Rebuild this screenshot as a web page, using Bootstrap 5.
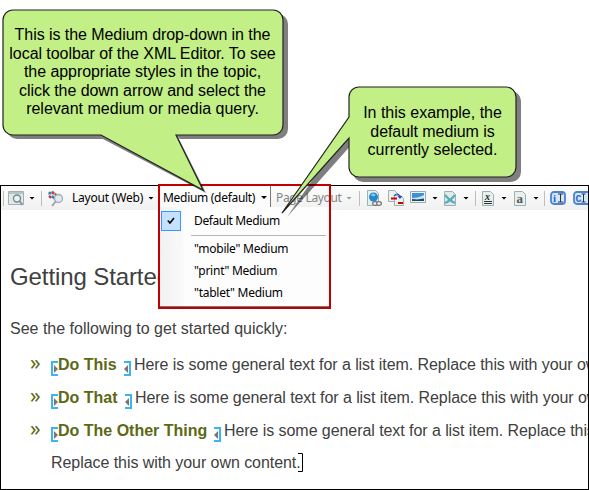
<!DOCTYPE html>
<html lang="en">
<head>
<meta charset="utf-8">
<meta name="viewport" content="width=device-width, initial-scale=1">
<title>Medium drop-down</title>
<link href="https://cdn.jsdelivr.net/npm/bootstrap@5.3.0/dist/css/bootstrap.min.css" rel="stylesheet">
<style>
body{width:589px;height:490px;background:#fff;font-family:"Liberation Sans",Arial,sans-serif;font-size:16px;color:#404040}
.stage{width:589px;height:490px;padding-top:185px}
.editor{height:305px;border:1px solid #000}
.tools{height:24px;background:linear-gradient(#fcfcfc,#f1f1f1);font-family:"Noto Sans","Open Sans",sans-serif;font-size:12px;color:#000}
.tools svg{flex:none;display:block}
.tools .label{flex:none}
.rule{flex:none;width:1px;height:15px;background:#bdbdbd}
.caret{flex:none;width:6px;height:3px;margin-right:-1px;background:#000;clip-path:polygon(0 0,100% 0,50% 100%)}
.caret.off{background:#999}
.medium{width:112px;height:23px;margin-left:6px;background:#fcfcfc;border-right:1px solid #777;padding-left:4px;align-self:flex-start}
.redbox{left:158px;top:184px;width:173px;height:125px;border:2px solid #c00000;z-index:3}
.options{left:160px;top:207px;width:170px;height:100px;background:linear-gradient(90deg,#f1f1f1,#fafafa 23px,#fdfdfd 24px);border-right:1px solid #888;border-bottom:1px solid #777;font-family:"Noto Sans","Open Sans",sans-serif;font-size:12px;color:#000;z-index:2;padding-top:3px}
.options .opt{height:22px;line-height:22px;padding-left:34px;letter-spacing:-.25px}
.options .first{letter-spacing:-.38px}
.options hr{margin:3px 3px 2px 31px;border-top:1px solid #b5b5b5;opacity:1}
.tick{width:20px;height:20px;left:1px;top:1px;background:#c4e1ff;border:1px solid #3399ff}
.page-text{padding:52px 0 0 9px}
.page-text h1{font-size:24px;line-height:30px;margin:0;color:#404040;letter-spacing:-.1px}
.page-text p{margin:25px 0 0;line-height:24px}
.steps{margin:7px 0 0;padding:0;list-style:none}
.step{height:33px;line-height:33px}
.bul{width:41px;padding-left:20px;color:#5e6814;flex:none;font-family:"Noto Sans",sans-serif;font-size:21px;padding-bottom:5px;line-height:28px}
.term{color:#5e6814;font-weight:700;flex:none}
.desc{margin-left:3px;letter-spacing:-.065px}
.tagmark{width:7px;height:15px;flex:none;margin-top:7px}
.note{z-index:5;color:#000;text-align:center;line-height:18.5px}
.note .line{display:block}
.note .snug{letter-spacing:-.06px}
.shapes{left:0;top:0;z-index:4}
</style>
</head>
<body>
<main class="stage position-relative overflow-hidden">
 <section class="editor overflow-hidden">
  <div class="tools d-flex align-items-center text-nowrap">
   <span class="rule" style="margin-left:2px"></span>
   <svg style="margin-left:4px" width="17" height="17" viewBox="0 0 17 17"><path d="M.5 1.500h15v13H.5z" fill="#dfe8e8" stroke="#9fb1b3"/><path d="M1 2h14v2H1z" fill="#b4c4c6"/><circle cx="9" cy="8.500" r="3.500" fill="#e7f3f6" stroke="#77898d" stroke-width="1.400"/><path d="M11.500 11l3 4" stroke="#8c9698" stroke-width="2"/></svg>
   <span class="caret" style="margin-left:4px"></span>
   <span class="rule" style="margin-left:7px"></span>
   <svg style="margin-left:5px" width="17" height="17" viewBox="0 0 17 17"><path d="M1 4l5-3 9 8-4 4z" fill="#d4e3ea" stroke="#9cacb3"/><path d="M2 2l2 2M5 6l2 2" stroke="#207db6" stroke-width="2"/><path d="M5 2l2 2M2 6l2 2M8 4l2 2" stroke="#d02c2c" stroke-width="2"/><circle cx="11.500" cy="8.500" r="4" fill="#dfeaf0" stroke="#9caeb6" stroke-width="1.300"/><path d="M9 11l-4 5" stroke="#a3a3a3" stroke-width="2"/></svg>
   <span class="label" style="margin-left:8px;width:76px;letter-spacing:-.2px">Layout (Web)</span>
   <span class="caret"></span>
   <div class="medium d-flex align-items-center flex-shrink-0"><span class="label" style="width:98px;letter-spacing:-.3px">Medium (default)</span><span class="caret"></span></div>
   <span class="label" style="margin-left:5px;width:70px;color:#858585;letter-spacing:-.35px">Page Layout</span>
   <span class="caret off"></span>
   <span class="rule" style="margin-left:8px"></span>
   <svg style="margin-left:7px" width="15" height="17" viewBox="0 0 15 17"><path d="M.5.500h8l3 3v12H.5z" fill="#e5efed" stroke="#9ab3b0"/><circle cx="6.500" cy="7" r="4.500" fill="#2488d0"/><path d="M3.500 5q3-3 5 0-1 2-3 1z" fill="#8dcbf2"/><g fill="#eee" stroke="#777" stroke-width="1.200"><ellipse cx="8" cy="13.500" rx="2.400" ry="1.800"/><ellipse cx="12" cy="13.500" rx="2.400" ry="1.800"/></g></svg>
   <svg style="margin-left:6px" width="17" height="17" viewBox="0 0 17 17"><path d="M.5.500h6l3 3v8H.5z" fill="#eaf2f0" stroke="#9ab3b0"/><path d="M6.500 5.500h6l3 3v7h-9z" fill="#eaf2f0" stroke="#9ab3b0"/><path d="M3 8.500h6M10 13h5" stroke="#d00000" stroke-width="2"/><path d="M6 6q3-4 6 0" fill="none" stroke="#2350bc" stroke-width="1.200"/><path d="M9.500 6h5L12 9z" fill="#2350bc"/></svg>
   <svg style="margin-left:5px" width="17" height="17" viewBox="0 0 17 17"><path d="M.5 1.500h15v11H.5z" fill="#eef4f5" stroke="#94acb2"/><path d="M2 3h12v5H2z" fill="#3b91dc"/><path d="M2 8q7 0 12-3v5H2z" fill="#c7e7f7"/><path d="M2 9l5 .5 7-1V11H2z" fill="#23485c"/></svg>
   <span class="caret" style="margin-left:5px"></span>
   <svg style="margin-left:7px" width="14" height="17" viewBox="0 0 14 17"><path d="M.5 1.500h8l3 3v11H.5z" fill="#e0ebe9" stroke="#9ab3b0"/><path d="M1 5q5 6 10 8M11 5Q6 11 1 13" fill="none" stroke="#5aa9bd" stroke-width="2.200"/></svg>
   <span class="caret" style="margin-left:5px"></span>
   <span class="rule" style="margin-left:7px"></span>
   <svg style="margin-left:6px" width="13" height="17" viewBox="0 0 13 17"><path d="M.5 1.500h8l3 3v11H.5z" fill="#e7f0ee" stroke="#9ab3b0"/><path d="M2 11.500h8M2 13.500h8" stroke="#333"/><text x="3" y="9.500" font-family="Liberation Serif,serif" font-style="italic" font-weight="700" font-size="10" fill="#222">x</text></svg>
   <span class="caret" style="margin-left:6px"></span>
   <svg style="margin-left:8px" width="13" height="17" viewBox="0 0 13 17"><path d="M.5 1.500h8l3 3v11H.5z" fill="#e7f0ee" stroke="#9ab3b0"/><text x="2.500" y="13" font-family="Liberation Serif,serif" font-weight="700" font-size="13" fill="#555">a</text></svg>
   <span class="caret" style="margin-left:6px"></span>
   <span class="rule" style="margin-left:6px"></span>
   <svg style="margin-left:5px" width="17" height="15" viewBox="0 0 17 15"><rect x="1" y="1" width="14" height="12" rx="3" fill="#d4e6fb" stroke="#4a83d4" stroke-width="1.800"/><text x="3" y="11" font-family="Liberation Serif,serif" font-weight="700" font-size="11" fill="#2668cc">i</text><path d="M8 3h5M8 11h5M10.500 3v8" stroke="#333"/></svg>
   <svg style="margin-left:6px" width="17" height="15" viewBox="0 0 17 15"><rect x="1" y="1" width="18" height="12" rx="3" fill="#d4e6fb" stroke="#4a83d4" stroke-width="1.800"/><text x="2.500" y="10.500" font-family="Liberation Mono,monospace" font-weight="700" font-size="10" fill="#2668cc">C</text><path d="M8.500 3h4M8.500 11h4M10.500 3v8" stroke="#333"/></svg>
  </div>
  <article class="page-text text-nowrap">
   <h1 class="fw-normal">Getting Started</h1>
   <p>See the following to get started quickly:</p>
   <ul class="steps">
    <li class="step d-flex align-items-center"><span class="bul">»</span><svg class="tagmark" viewBox="0 0 7 15"><path d="M7 1H1v13h6" fill="none" stroke="#3cb4f0" stroke-width="2"/><path d="M3 4l4 4-4 4z" fill="#777"/></svg><span class="term" style="width:66px">Do This</span><svg class="tagmark" viewBox="0 0 7 15"><path d="M0 1h6v13H0" fill="none" stroke="#3cb4f0" stroke-width="2"/><path d="M4 4L0 8l4 4z" fill="#777"/></svg><span class="desc">Here is some general text for a list item. Replace this with your own</span></li>
    <li class="step d-flex align-items-center"><span class="bul">»</span><svg class="tagmark" viewBox="0 0 7 15"><path d="M7 1H1v13h6" fill="none" stroke="#3cb4f0" stroke-width="2"/><path d="M3 4l4 4-4 4z" fill="#777"/></svg><span class="term" style="width:67px">Do That</span><svg class="tagmark" viewBox="0 0 7 15"><path d="M0 1h6v13H0" fill="none" stroke="#3cb4f0" stroke-width="2"/><path d="M4 4L0 8l4 4z" fill="#777"/></svg><span class="desc">Here is some general text for a list item. Replace this with your own</span></li>
    <li class="step d-flex align-items-center"><span class="bul">»</span><svg class="tagmark" viewBox="0 0 7 15"><path d="M7 1H1v13h6" fill="none" stroke="#3cb4f0" stroke-width="2"/><path d="M3 4l4 4-4 4z" fill="#777"/></svg><span class="term" style="width:156px">Do The Other Thing</span><svg class="tagmark" viewBox="0 0 7 15"><path d="M0 1h6v13H0" fill="none" stroke="#3cb4f0" stroke-width="2"/><path d="M4 4L0 8l4 4z" fill="#777"/></svg><span class="desc">Here is some general text for a list item. Replace this</span></li>
    <li class="d-flex align-items-center" style="padding-left:41px;height:31px"><span style="letter-spacing:-.06px">Replace this with your own content.</span><svg width="5" height="19" viewBox="0 0 5 19" style="margin-left:-3px;flex:none"><path d="M0 .5h4.500v18H0" fill="none" stroke="#000"/></svg></li>
   </ul>
  </article>
 </section>

 <div class="options position-absolute text-nowrap">
  <div class="opt first position-relative"><span class="tick position-absolute d-flex align-items-center justify-content-center"><svg width="8" height="8" viewBox="0 0 8 8"><path d="M.8 3.500L3 6l4-5" fill="none" stroke="#000" stroke-width="1.600"/></svg></span>Default Medium</div>
  <hr>
  <div class="opt">"mobile" Medium</div>
  <div class="opt">"print" Medium</div>
  <div class="opt">"tablet" Medium</div>
 </div>
 <div class="redbox position-absolute"></div>

 <svg class="shapes position-absolute" width="589" height="230" viewBox="0 0 589 230">
  <g fill="#000" fill-opacity=".5">
   <path d="M17 14H278a10 10 0 0 1 10 10V129a10 10 0 0 1-10 10H180L178 137 206 193 101 138 103 139H17a10 10 0 0 1-10-10V24a10 10 0 0 1 10-10z"/>
   <path d="M363 91H511a10 10 0 0 1 10 10V172a10 10 0 0 1-10 10H363a10 10 0 0 1-10-10V143L287 217 353 121V101a10 10 0 0 1 10-10z"/>
  </g>
  <g fill="#c2ef86" stroke="#222" stroke-width="1.200">
   <path d="M13 10H273a10 10 0 0 1 10 10V125a10 10 0 0 1-10 10H176L203 190 101 135H13a10 10 0 0 1-10-10V20a10 10 0 0 1 10-10z"/>
   <path d="M359 87H506a10 10 0 0 1 10 10V167a10 10 0 0 1-10 10H359a10 10 0 0 1-10-10V138L282 213 349 117V97a10 10 0 0 1 10-10z"/>
  </g>
 </svg>
 <div class="note position-absolute text-nowrap" style="left:3px;top:26px;width:279px">
  <span class="line snug">This is the Medium drop-down in the</span>
  <span class="line snug">local toolbar of the XML Editor. To see</span>
  <span class="line snug">the appropriate styles in the topic,</span>
  <span class="line snug">click the down arrow and select the</span>
  <span class="line">relevant medium or media query.</span>
 </div>
 <div class="note position-absolute text-nowrap" style="left:349px;top:104px;width:167px">
  <span class="line">In this example, the</span>
  <span class="line snug">default medium is</span>
  <span class="line">currently selected.</span>
 </div>
</main>
<script src="https://cdn.jsdelivr.net/npm/bootstrap@5.3.0/dist/js/bootstrap.bundle.min.js"></script>
</body>
</html>
